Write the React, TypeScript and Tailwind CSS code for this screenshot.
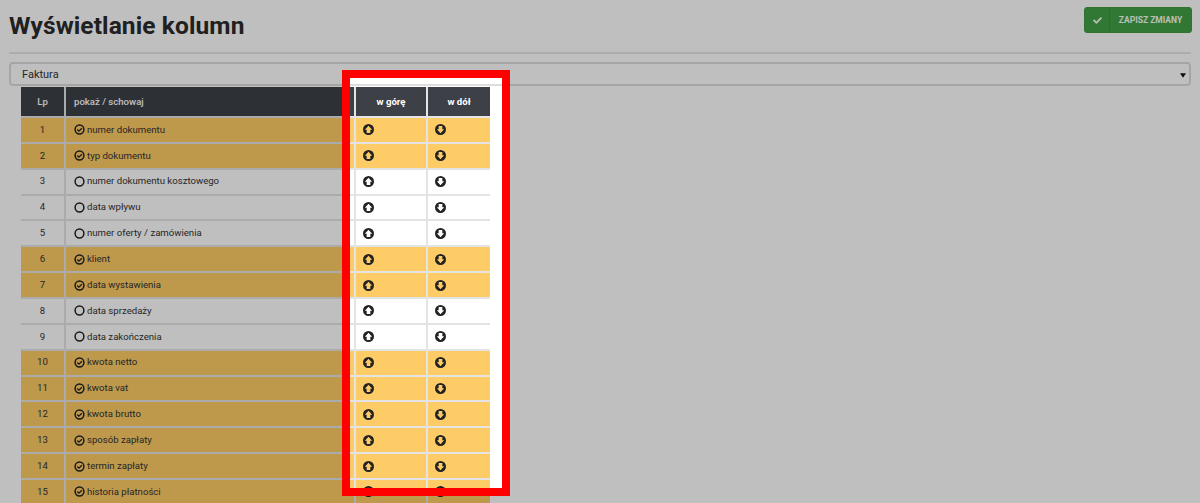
import { FaCheck } from 'react-icons/fa';

const columns: { label: string; on: boolean }[] = [
  { label: 'numer dokumentu', on: true },
  { label: 'typ dokumentu', on: true },
  { label: 'numer dokumentu kosztowego', on: false },
  { label: 'data wpływu', on: false },
  { label: 'numer oferty / zamówienia', on: false },
  { label: 'klient', on: true },
  { label: 'data wystawienia', on: true },
  { label: 'data sprzedaży', on: false },
  { label: 'data zakończenia', on: false },
  { label: 'kwota netto', on: true },
  { label: 'kwota vat', on: true },
  { label: 'kwota brutto', on: true },
  { label: 'sposób zapłaty', on: true },
  { label: 'termin zapłaty', on: true },
  { label: 'historia płatności', on: true },
];

// Ring with an optional tick, heavier than the icon pack's outline
const ToggleIcon = ({ on }: { on: boolean }) => (
  <svg viewBox="0 0 11 11" className="h-[11px] w-[11px] shrink-0" fill="none" stroke="#222" strokeWidth="1.5">
    <circle cx="5.5" cy="5.5" r="4.4" />
    {on && <path d="M3.2 5.5l1.7 1.7 3-3" strokeWidth="1.3" />}
  </svg>
);

// Solid disc with a fat arrow cut out of it
const ArrowIcon = ({ down }: { down?: boolean }) => (
  <svg viewBox="0 0 24 24" className={down ? 'h-[11px] w-[11px] rotate-180' : 'h-[11px] w-[11px]'} fill="#222">
    <path
      fillRule="evenodd"
      d="M12 0a12 12 0 1 0 0 24a12 12 0 1 0 0-24zM12 4l8 8.5h-4V19.5h-8V12.5H4z"
    />
  </svg>
);

const App = () => {
  return (
    <div className="relative h-[503px] w-[1200px] overflow-hidden bg-white font-['Roboto',sans-serif] text-[#333]">
      {/* Header */}
      <div className="flex items-start justify-between pl-[9px] pr-[8px] pt-[7px]">
        <h1 className="text-[24.5px] leading-[38px] font-bold tracking-[0.1px] text-[#2b2b2b]">Wyświetlanie kolumn</h1>
        <button className="flex h-[26px] w-[108px] items-center rounded-[3px] border border-[#3f9a3f] bg-[#43a047] text-[8.5px] font-bold text-[#f4fff4]">
          <span className="flex h-full w-[25px] items-center justify-center border-r border-[#3c903f]">
            <FaCheck className="h-[9px] w-[9px]" />
          </span>
          <span className="flex-1 text-center">ZAPISZ ZMIANY</span>
        </button>
      </div>
      <div className="mx-[9px] mt-[7px] h-[2px] bg-[#e6e6e6]" />

      {/* Document type select */}
      <div className="mx-[9px] mt-[8px] flex h-[24px] items-center justify-between rounded-[4px] border-2 border-[#ddd] bg-white pl-[11px] pr-[3px] pt-[3px] text-[11px]">
        <span>Faktura</span>
        <svg viewBox="0 0 8 6" className="h-[5px] w-[6px]" fill="#111">
          <path d="M0 0h8L4 6z" />
        </svg>
      </div>

      {/* Columns table */}
      <table className="ml-[21px] mt-[1px] w-[469px] table-fixed border-collapse text-[9.6px]">
        <colgroup>
          <col className="w-[44px]" />
          <col className="w-[290px]" />
          <col className="w-[72px]" />
          <col className="w-[63px]" />
        </colgroup>
        <thead>
          <tr className="h-[30px] bg-[#3d4047] text-white">
            <th className="border-2 border-l-0 border-t-0 border-[#e4e4e4] pt-[1px] text-center font-medium">Lp</th>
            <th className="border-2 border-t-0 border-[#e4e4e4] pl-[8px] pt-[1px] text-left font-medium">pokaż / schowaj</th>
            <th className="border-2 border-t-0 border-[#e4e4e4] pt-[1px] text-center font-bold">w górę</th>
            <th className="border-2 border-r-0 border-t-0 border-[#e4e4e4] pt-[1px] text-center font-bold">w dół</th>
          </tr>
        </thead>
        <tbody>
          {columns.map((column, index) => (
            <tr key={column.label} className={column.on ? 'h-[25.87px] bg-[#fecc66]' : 'h-[25.87px] bg-white'}>
              <td className="border-2 border-l-0 border-[#e4e4e4] text-center">{index + 1}</td>
              <td className="border-2 border-[#e4e4e4] pl-[8px]">
                <span className="flex items-center gap-[2px]">
                  <ToggleIcon on={column.on} />
                  {column.label}
                </span>
              </td>
              <td className="border-2 border-[#e4e4e4] pl-[7px]">
                <ArrowIcon />
              </td>
              <td className="border-2 border-r-0 border-[#e4e4e4] pl-[7px]">
                <ArrowIcon down />
              </td>
            </tr>
          ))}
        </tbody>
      </table>

      {/* Highlight frame over the page, dims everything around it */}
      <div className="absolute left-[342px] top-[70px] h-[426px] w-[168px] border-8 border-[#ff0000] shadow-[0_0_0_2000px_rgba(0,0,0,0.25)]" />
    </div>
  );
};

export default App;
